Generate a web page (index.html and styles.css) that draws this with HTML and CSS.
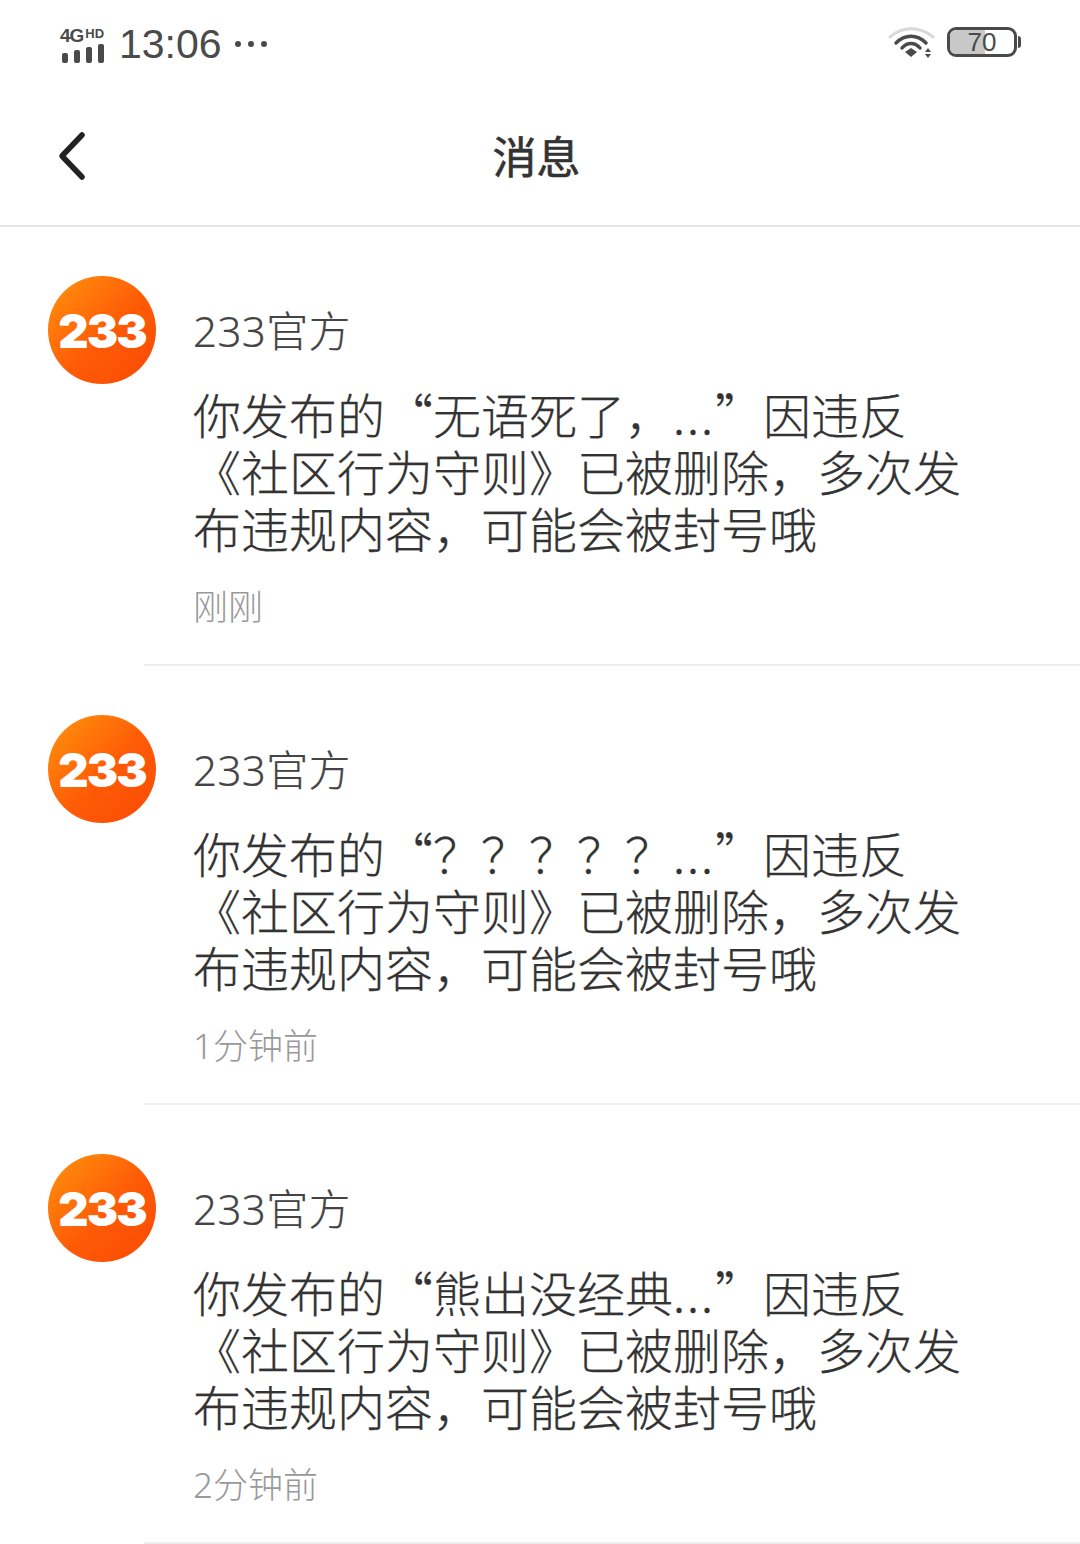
FILE: index.html
```html
<!DOCTYPE html>
<html lang="zh">
<head>
    <meta charset="utf-8">
    <title>消息</title>
    <link rel="stylesheet" href="styles.css">
</head>
<body>
    <div class="status-bar">
        <div class="status-left">
            <div class="signal">
                <div class="signal-text"><span class="net">4G</span><span class="hd">HD</span></div>
                <div class="bars"><i></i><i></i><i></i><i></i></div>
            </div>
            <span class="clock">13:06</span>
            <div class="dots"><i></i><i></i><i></i></div>
        </div>
        <div class="status-right">
            <svg class="wifi" width="48" height="36" viewBox="0 0 48 36">
                <path d="M2 13 C14 2 32 2 45 13" fill="none" stroke="#d8d8d8" stroke-width="3" stroke-linecap="round"/>
                <path d="M8 19 C17 10 29 10 38 19" fill="none" stroke="#4a4a4a" stroke-width="3.5" stroke-linecap="round"/>
                <path d="M14 24 C19 18 27 18 32 24" fill="none" stroke="#4a4a4a" stroke-width="3.5" stroke-linecap="round"/>
                <path d="M17 28 L23 24 L29 28 L23 33 Z" fill="#4a4a4a"/>
                <path d="M40 24 L43 28 L37 28 Z M37 30 L43 30 L40 34 Z" fill="#4a4a4a"/>
            </svg>
            <div class="battery">
                <div class="battery-fill"></div>
                <span class="battery-num">70</span>
            </div>
            <div class="battery-tip"></div>
        </div>
    </div>

    <div class="nav-bar">
        <svg class="back" width="32" height="50" viewBox="0 0 32 50">
            <path d="M26 4 L6 25 L26 46" fill="none" stroke="#222" stroke-width="5.5" stroke-linecap="round" stroke-linejoin="round"/>
        </svg>
        <h1>消息</h1>
    </div>

    <div class="list">
        <div class="item">
            <div class="avatar"><span>233</span></div>
            <div class="content">
                <div class="name">233官方</div>
                <p class="text">你发布的“无语死了，<span class="ellipsis">...</span>”因违反《社区行为守则》已被删除，多次发布违规内容，可能会被封号哦</p>
                <div class="time">刚刚</div>
            </div>
        </div>
        <div class="item">
            <div class="avatar"><span>233</span></div>
            <div class="content">
                <div class="name">233官方</div>
                <p class="text">你发布的“？？？？？<span class="ellipsis">...</span>”因违反《社区行为守则》已被删除，多次发布违规内容，可能会被封号哦</p>
                <div class="time">1分钟前</div>
            </div>
        </div>
        <div class="item">
            <div class="avatar"><span>233</span></div>
            <div class="content">
                <div class="name">233官方</div>
                <p class="text">你发布的“熊出没经典<span class="ellipsis">...</span>”因违反《社区行为守则》已被删除，多次发布违规内容，可能会被封号哦</p>
                <div class="time">2分钟前</div>
            </div>
        </div>
    </div>
</body>
</html>
```

FILE: styles.css
```css
body {
    margin: 0;
    background-color: #fff;
    font-family: "Noto Sans CJK SC", "Noto Sans", sans-serif;
    color: #444;
}

/* status bar */
.status-bar {
    height: 90px;
    display: flex;
    justify-content: space-between;
    align-items: center;
    padding: 0 59px 6px 60px;
    box-sizing: border-box;
}
.status-left {
    display: flex;
    align-items: center;
}
.signal {
    width: 46px;
    margin-top: 6px;
}
.signal-text {
    display: flex;
    align-items: flex-start;
    font-family: "Liberation Sans", sans-serif;
    font-weight: bold;
    line-height: 15px;
    color: #4a4a4a;
}
.net {
    font-size: 19px;
    letter-spacing: -1px;
}
.hd {
    font-size: 13px;
    line-height: 11px;
    margin-left: 2px;
}
.bars {
    display: flex;
    align-items: flex-end;
    gap: 6px;
    margin: 1px 0 0 2px;
}
.bars i {
    width: 6px;
    background-color: #4a4a4a;
    border-radius: 2px;
}
.bars i:nth-child(1) { height: 10px; }
.bars i:nth-child(2) { height: 13px; }
.bars i:nth-child(3) { height: 16px; }
.bars i:nth-child(4) { height: 19px; }
.clock {
    font-family: "Liberation Sans", sans-serif;
    font-size: 41px;
    line-height: 50px;
    color: #4a4a4a;
    margin: 4px 0 0 13px;
}
.dots {
    display: flex;
    gap: 7px;
    margin: 4px 0 0 13px;
}
.dots i {
    width: 6px;
    height: 6px;
    border-radius: 50%;
    background-color: #4a4a4a;
}
.status-right {
    display: flex;
    align-items: center;
}
.wifi {
    margin: 0 11px 0 2px;
}
.battery {
    position: relative;
    width: 64px;
    height: 24px;
    border: 3px solid #4a4a4a;
    border-radius: 9px;
    overflow: hidden;
}
.battery-fill {
    width: 55%;
    height: 100%;
    background-color: #c8c8c8;
}
.battery-num {
    position: absolute;
    top: 0;
    left: 0;
    width: 100%;
    text-align: center;
    font-family: "Liberation Sans", sans-serif;
    font-size: 26px;
    line-height: 25px;
    color: #4a4a4a;
}
.battery-tip {
    width: 3px;
    height: 12px;
    background-color: #4a4a4a;
    border-radius: 0 3px 3px 0;
    margin-left: 1px;
}

/* title bar */
.nav-bar {
    position: relative;
    height: 137px;
    box-sizing: border-box;
    border-bottom: 2px solid #e6e6e6;
    display: flex;
    align-items: center;
    justify-content: center;
}
.nav-bar h1 {
    margin: 0 7px 6px 0;
    font-size: 44px;
    font-weight: 400;
    -webkit-text-stroke: 0.6px #333;
    color: #333;
}
.back {
    position: absolute;
    left: 56px;
    top: 41px;
}

/* messages */
.item {
    position: relative;
    height: 439px;
    box-sizing: border-box;
    padding: 49px 0 0 48px;
    display: flex;
    gap: 37px;
}
.item::after {
    content: "";
    position: absolute;
    left: 144px;
    right: 0;
    bottom: 0;
    height: 2px;
    background-color: #eee;
}
.avatar {
    width: 108px;
    height: 108px;
    flex-shrink: 0;
    border-radius: 50%;
    background: linear-gradient(135deg, #ff8a0c 10%, #ff5a06 55%, #f84a05 100%);
    display: flex;
    align-items: center;
    justify-content: center;
}
.avatar span {
    font-family: "Inter", sans-serif;
    font-size: 47px;
    font-weight: 900;
    letter-spacing: -2px;
    color: #fff;
}
.content {
    width: 790px;
}
.name {
    font-family: "Noto Sans", "Noto Sans CJK SC", sans-serif;
    font-size: 42px;
    font-weight: 300;
    letter-spacing: 0.4px;
    line-height: 58px;
    margin-top: 26px;
    color: #444;
    -webkit-text-stroke: 0.2px #444;
}
.text {
    margin: 25px 0 0;
    font-size: 48px;
    font-weight: 300;
    line-height: 57px;
    color: #333;
    -webkit-text-stroke: 0.25px #333;
}
.ellipsis {
    letter-spacing: 2px;
}
.time {
    margin-top: 26px;
    font-family: "Noto Sans", "Noto Sans CJK SC", sans-serif;
    font-size: 35px;
    font-weight: 300;
    line-height: 50px;
    color: #999;
}
```
